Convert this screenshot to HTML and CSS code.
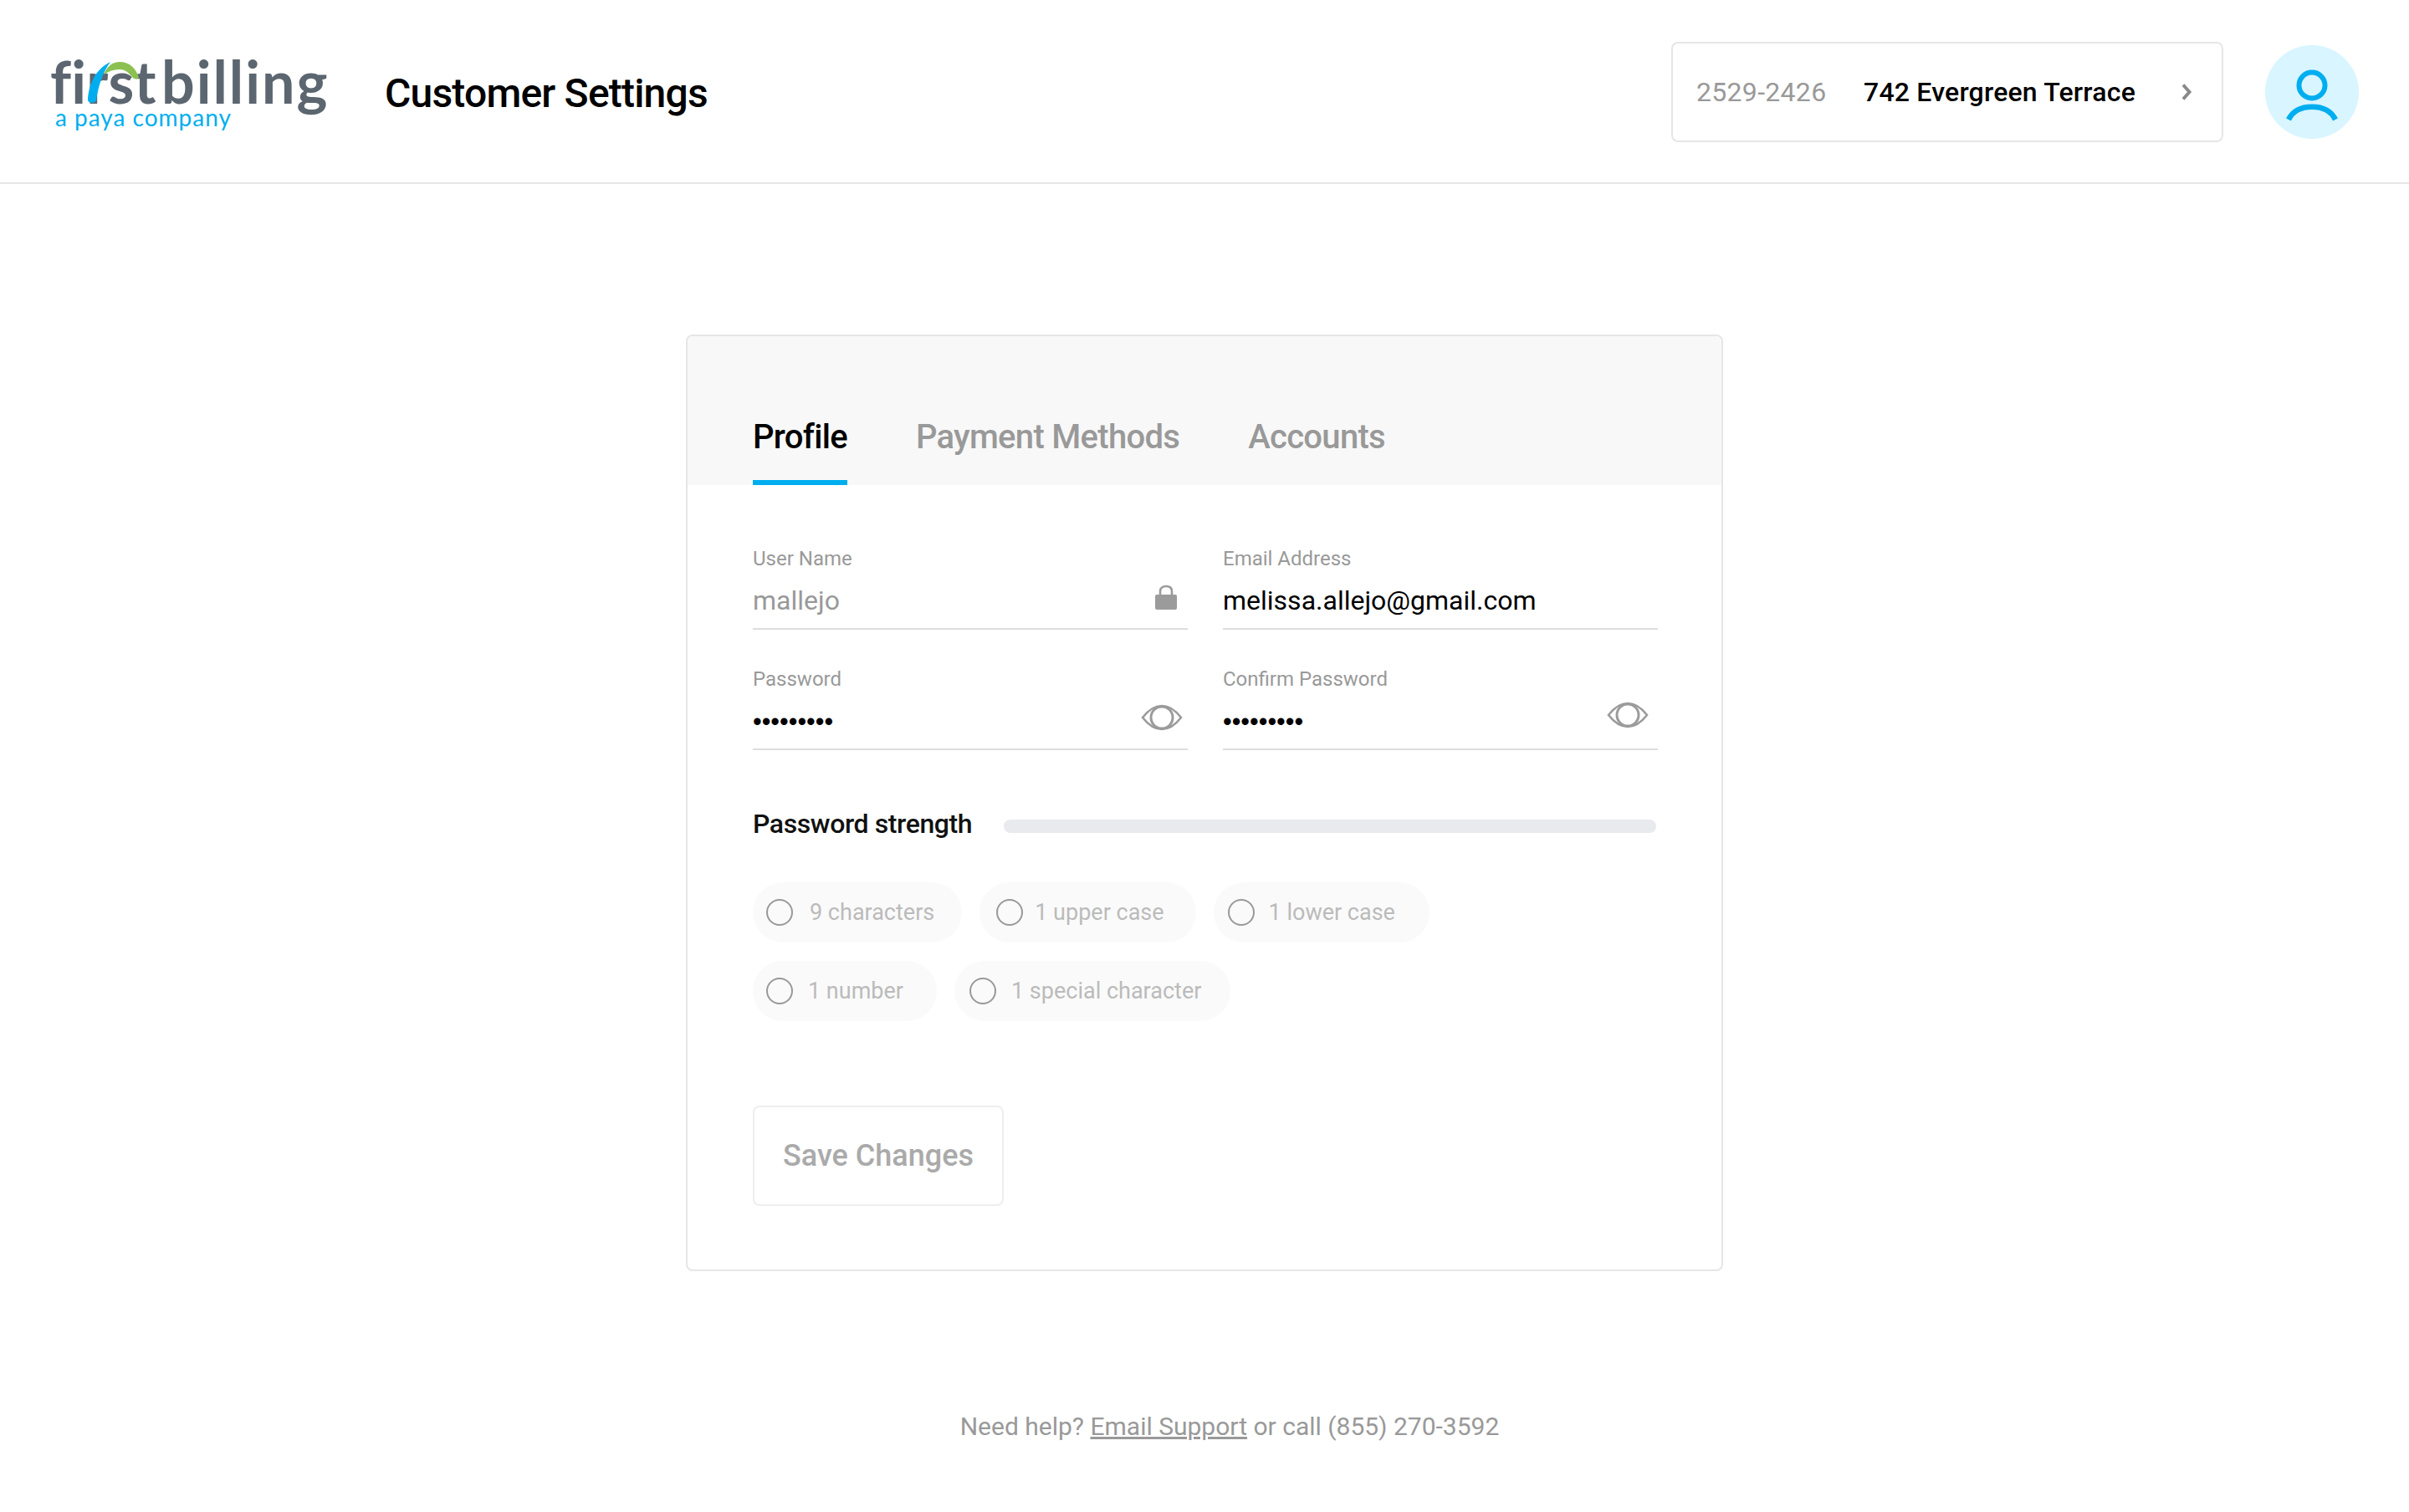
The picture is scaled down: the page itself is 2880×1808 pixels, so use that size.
FILE: index.html
```html
<!DOCTYPE html>
<html lang="en">
<head>
<meta charset="utf-8">
<title>Customer Settings</title>
<link rel="stylesheet" href="styles.css">
</head>
<body>
<header class="topbar">
  <div class="logo">
    <div class="logo-main">first <span class="logo-word">billing</span></div>
    <div class="logo-sub">a paya company</div>
    <svg class="logo-arc" viewBox="0 0 70 60" width="70" height="60" aria-hidden="true">
      <path d="M5 55C6 35 14 18 32 9C24 20 18 35 15 55C14 59 6 59 5 55Z" fill="#00aeef"/>
      <path d="M24 24C28 14 35 9 43 9C55 9 63 17 66 28C63 31 59 29 57 26C53 21 49 18 43 18C36 18 30 20 24 24Z" fill="#8cc152"/>
    </svg>
  </div>
  <h1 class="page-title">Customer Settings</h1>
  <button class="account">
    <span class="account-num">2529-2426</span>
    <span class="account-addr">742 Evergreen Terrace</span>
    <svg class="chevron" viewBox="0 0 14 22" width="14" height="22" aria-hidden="true"><path d="M3 2.5L10.5 11L3 19.5" fill="none" stroke="#8a8a8a" stroke-width="4"/></svg>
  </button>
  <div class="avatar">
    <svg viewBox="0 0 64 70" width="64" height="70" aria-hidden="true">
      <circle cx="32" cy="27" r="15.5" fill="none" stroke="#00aeef" stroke-width="6"/>
      <path d="M4 68C9 58 19 52.8 32 52.8C45 52.8 55 58 60 68" fill="none" stroke="#00aeef" stroke-width="6.5"/>
    </svg>
  </div>
</header>

<main class="page">
  <section class="card">
    <nav class="tabs">
      <a class="tab tab-active">Profile</a>
      <a class="tab">Payment Methods</a>
      <a class="tab">Accounts</a>
    </nav>
    <div class="card-body">
      <div class="fields">
        <div class="field">
          <div class="field-label">User Name</div>
          <div class="field-row">
            <span class="field-value muted">mallejo</span>
            <svg class="lock" viewBox="0 0 26 31" width="26" height="31" aria-hidden="true">
              <path d="M6 14V8C6 4 9 2 13 2C17 2 20 4 20 8V14" fill="none" stroke="#9b9b9b" stroke-width="2.6"/>
              <rect x="0" y="12" width="26" height="18" rx="2" fill="#9b9b9b"/>
            </svg>
          </div>
        </div>
        <div class="field">
          <div class="field-label">Email Address</div>
          <div class="field-row"><span class="field-value">melissa.allejo@gmail.com</span></div>
        </div>
        <div class="field">
          <div class="field-label">Password</div>
          <div class="field-row">
            <span class="field-dots">•••••••••</span>
            <svg class="eye" viewBox="0 0 50 32" width="50" height="32" aria-hidden="true">
              <path d="M2 16C9 7 16 2 25 2C34 2 41 7 48 16C41 25 34 30 25 30C16 30 9 25 2 16Z" fill="none" stroke="#9b9b9b" stroke-width="2.6"/>
              <circle cx="25" cy="16" r="13" fill="none" stroke="#9b9b9b" stroke-width="3"/>
            </svg>
          </div>
        </div>
        <div class="field">
          <div class="field-label">Confirm Password</div>
          <div class="field-row">
            <span class="field-dots">•••••••••</span>
            <svg class="eye eye-raised" viewBox="0 0 50 32" width="50" height="32" aria-hidden="true">
              <path d="M2 16C9 7 16 2 25 2C34 2 41 7 48 16C41 25 34 30 25 30C16 30 9 25 2 16Z" fill="none" stroke="#9b9b9b" stroke-width="2.6"/>
              <circle cx="25" cy="16" r="13" fill="none" stroke="#9b9b9b" stroke-width="3"/>
            </svg>
          </div>
        </div>
      </div>

      <div class="strength">
        <span class="strength-label">Password strength</span>
        <div class="strength-bar"></div>
      </div>

      <div class="rules">
        <div class="rule rule-chars"><span class="dot"></span>9 characters</div>
        <div class="rule rule-upper"><span class="dot"></span>1 upper case</div>
        <div class="rule rule-lower"><span class="dot"></span>1 lower case</div>
        <div class="rule rule-number"><span class="dot"></span>1 number</div>
        <div class="rule rule-special"><span class="dot"></span>1 special character</div>
      </div>

      <button class="save">Save Changes</button>
    </div>
  </section>
  <footer class="help">Need help? <a class="help-link">Email Support</a> or call (855) 270-3592</footer>
</main>
</body>
</html>
```

FILE: styles.css
```css
* { box-sizing: border-box; }
html, body { margin: 0; background: #fff; }
body { font-family: Roboto, "Liberation Sans", sans-serif; color: #000; width: 2880px; height: 1808px; overflow: hidden; }

.topbar {
  height: 220px;
  border-bottom: 2px solid #e6e6e6;
  display: flex;
  align-items: center;
  padding: 1px 60px 0;
}
.logo { position: relative; width: 333px; height: 90px; margin-right: 67px; flex: none; }
.logo-main {
  font-family: Lato, sans-serif;
  font-size: 70px;
  font-weight: 700;
  font-variant-ligatures: none;
  line-height: 64px;
  color: #5c6670;
  letter-spacing: 0.2px;
  word-spacing: -11px;
  white-space: nowrap;
}
.logo-word { letter-spacing: 2px; }
.logo-sub {
  font-family: Lato, sans-serif;
  font-size: 28px;
  line-height: 23px;
  color: #00aeef;
  padding-left: 6px;
  letter-spacing: 1px;
  white-space: nowrap;
}
.logo-arc { position: absolute; left: 40px; top: 0; }
.page-title { margin: 4px 0 0; font-size: 48px; font-weight: 500; letter-spacing: -0.8px; flex: 1; }

.account {
  width: 660px;
  height: 120px;
  border: 2px solid #e6e6e6;
  border-radius: 8px;
  background: #fff;
  display: flex;
  align-items: center;
  padding: 0 35px 0 28px;
  font-family: inherit;
  margin-right: 50px;
}
.account-num { font-size: 32px; color: #999; width: 200px; text-align: left; letter-spacing: 0.3px; }
.account-addr { font-size: 32px; font-weight: 500; color: #000; flex: 1; text-align: left; letter-spacing: 0.2px; }
.avatar {
  width: 112px;
  height: 112px;
  border-radius: 50%;
  background: #d9f5ff;
  display: flex;
  align-items: center;
  justify-content: center;
  flex: none;
}

.page { display: flex; flex-direction: column; align-items: center; padding-top: 180px; }
.card { width: 1240px; height: 1120px; border: 2px solid #e6e6e6; border-radius: 8px; }
.tabs {
  height: 178px;
  background: #f8f8f8;
  border-radius: 6px 6px 0 0;
  display: flex;
  align-items: flex-end;
  gap: 82px;
  padding-left: 78px;
}
.tab { font-size: 40px; font-weight: 500; color: #999; height: 90px; line-height: 66px; letter-spacing: -0.7px; }
.tab-active { color: #000; border-bottom: 6px solid #00aeef; }

.card-body { padding: 0 76px 0 78px; }
.fields { display: grid; grid-template-columns: 520px 520px; column-gap: 42px; padding-top: 69px; }
.field { height: 144px; padding-top: 1px; }
.field-label { font-size: 24px; line-height: 36px; color: #999; }
.field-row {
  height: 63px;
  margin-top: 4px;
  padding-bottom: 6px;
  border-bottom: 2px solid #ddd;
  display: flex;
  align-items: center;
  justify-content: space-between;
}
.field-value { font-size: 32px; line-height: 46px; color: #000; }
.muted { color: #999; }
.field-dots { font-family: "Liberation Sans", sans-serif; font-size: 30.5px; line-height: 40px; }
.lock { margin: -7px 13px 0 0; }
.eye { margin: -8px 6px 0 0; }
.eye-raised { margin-top: -14px; margin-right: 11px; }

.strength { display: flex; align-items: center; margin-top: 28px; height: 40px; }
.strength-label { font-size: 32px; font-weight: 500; width: 300px; color: #111; letter-spacing: -0.4px; }
.strength-bar { width: 780px; height: 16px; margin-top: 6px; border-radius: 8px; background: #e8eaed; }

.rules { display: flex; flex-wrap: wrap; gap: 22px 21px; width: 860px; margin-top: 50px; }
.rule {
  height: 72px;
  border-radius: 36px;
  background: #fafafa;
  display: flex;
  align-items: center;
  padding: 0 33px 0 16px;
  font-size: 27px;
  color: #bbb;
  white-space: nowrap;
}
.dot { width: 32px; height: 32px; border: 2px solid #999; border-radius: 50%; margin-right: 20px; flex: none; }
.rule-upper { padding: 0 38px 0 20px; }
.rule-upper .dot { margin-right: 14px; }
.rule-lower { padding: 0 41px 0 17px; }
.rule-lower .dot { margin-right: 17px; }
.rule-number { padding-right: 40px; }
.rule-number .dot { margin-right: 18px; }
.rule-special { padding: 0 35px 0 18px; }
.rule-special .dot { margin-right: 18px; }

.save {
  display: block;
  width: 300px;
  height: 120px;
  margin-top: 101px;
  background: #fff;
  border: 2px solid #eee;
  border-radius: 8px;
  font-family: inherit;
  font-size: 36px;
  font-weight: 500;
  color: #aaa;
}

.help { margin-top: 166px; padding-left: 60px; font-size: 30px; line-height: 40px; color: #999; }
.help-link { text-decoration: underline; }
```
